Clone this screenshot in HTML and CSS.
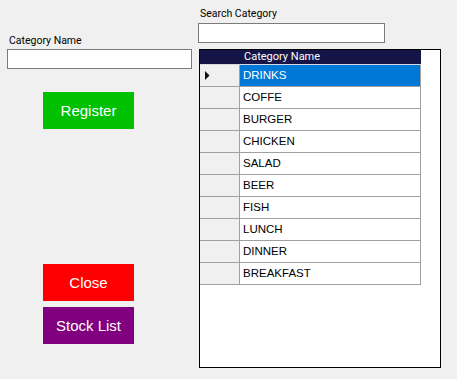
FILE: index.html
```html
<!DOCTYPE html>
<html lang="en">
<head>
  <meta charset="UTF-8" />
  <meta name="viewport" content="width=device-width, initial-scale=1.0" />
  <title>Category</title>
  <link rel="stylesheet" href="styles.css">
</head>
<body>
  <div class="form">
    <div class="left">
      <label class="label">Category Name</label>
      <input class="textbox" type="text" />
      <button class="btn btn-register">Register</button>
      <button class="btn btn-close">Close</button>
      <button class="btn btn-stock">Stock List</button>
    </div>

    <div class="right">
      <label class="label">Search Category</label>
      <input class="textbox search" type="text" />

      <div class="grid">
        <div class="grid-head">
          <div class="corner"></div>
          <div class="head-cell">Category Name</div>
        </div>
        <div class="grid-row selected">
          <div class="row-head">
            <svg width="5" height="9" viewBox="0 0 5 9"><polygon points="0,0 4.5,4.5 0,9" fill="#111" /></svg>
          </div>
          <div class="cell">DRINKS</div>
        </div>
        <div class="grid-row"><div class="row-head"></div><div class="cell">COFFE</div></div>
        <div class="grid-row"><div class="row-head"></div><div class="cell">BURGER</div></div>
        <div class="grid-row"><div class="row-head"></div><div class="cell">CHICKEN</div></div>
        <div class="grid-row"><div class="row-head"></div><div class="cell">SALAD</div></div>
        <div class="grid-row"><div class="row-head"></div><div class="cell">BEER</div></div>
        <div class="grid-row"><div class="row-head"></div><div class="cell">FISH</div></div>
        <div class="grid-row"><div class="row-head"></div><div class="cell">LUNCH</div></div>
        <div class="grid-row"><div class="row-head"></div><div class="cell">DINNER</div></div>
        <div class="grid-row"><div class="row-head"></div><div class="cell">BREAKFAST</div></div>
      </div>
    </div>
  </div>
</body>
</html>
```

FILE: styles.css
```css
* {
  margin: 0;
  padding: 0;
  box-sizing: border-box;
}

body {
  font-family: Roboto, 'Liberation Sans', sans-serif;
  background: #f0f0f0;
  color: #000;
  width: 457px;
  height: 379px;
  overflow: hidden;
}

.form {
  display: flex;
  align-items: flex-start;
}

.label {
  display: block;
  font-size: 10.5px;
  line-height: 13px;
  padding-left: 2px;
}

.textbox {
  display: block;
  height: 20px;
  border: 1px solid #7a7a7a;
  background: #fff;
  outline: none;
}

/* left side */
.left {
  width: 185px;
  margin-left: 7px;
  padding-top: 34px;
  display: flex;
  flex-direction: column;
}

.left .label {
  margin-bottom: 2px;
}

.left .textbox {
  width: 185px;
}

.btn {
  width: 91px;
  height: 37px;
  margin-left: 36px;
  border: none;
  color: #fff;
  font-family: 'Liberation Sans', Arial, sans-serif;
  font-size: 15px;
}

.btn-register {
  background: #00c000;
  margin-top: 23px;
}

.btn-close {
  background: #ff0000;
  margin-top: 135px;
}

.btn-stock {
  background: #800080;
  margin-top: 6px;
}

/* right side */
.right {
  margin-left: 6px;
  padding-top: 7px;
}

.right .label {
  margin-bottom: 3px;
}

.search {
  width: 187px;
}

.grid {
  margin-top: 6px;
  margin-left: 1px;
  width: 242px;
  height: 319px;
  border: 1px solid #000;
  background: #fff;
  font-family: 'Liberation Sans', Arial, sans-serif;
}

.grid-head {
  display: flex;
  width: 221px;
  height: 15px;
  background: #141447;
  border-bottom: 1px solid #d8d8e0;
}

.corner {
  width: 40px;
}

.head-cell {
  color: #fff;
  font-family: Roboto, sans-serif;
  font-size: 11px;
  line-height: 14px;
  padding-left: 4px;
}

.grid-row {
  display: flex;
  height: 22px;
}

.row-head {
  width: 40px;
  background: #f0f0f0;
  border-right: 1px solid #a0a0a0;
  border-bottom: 1px solid #a0a0a0;
  display: flex;
  align-items: center;
  padding-left: 5px;
}

.cell {
  width: 181px;
  border-right: 1px solid #a0a0a0;
  border-bottom: 1px solid #a0a0a0;
  font-size: 11.5px;
  line-height: 21px;
  padding-left: 3px;
  white-space: nowrap;
}

.selected .cell {
  background: #0078d7;
  color: #fff;
}
```
